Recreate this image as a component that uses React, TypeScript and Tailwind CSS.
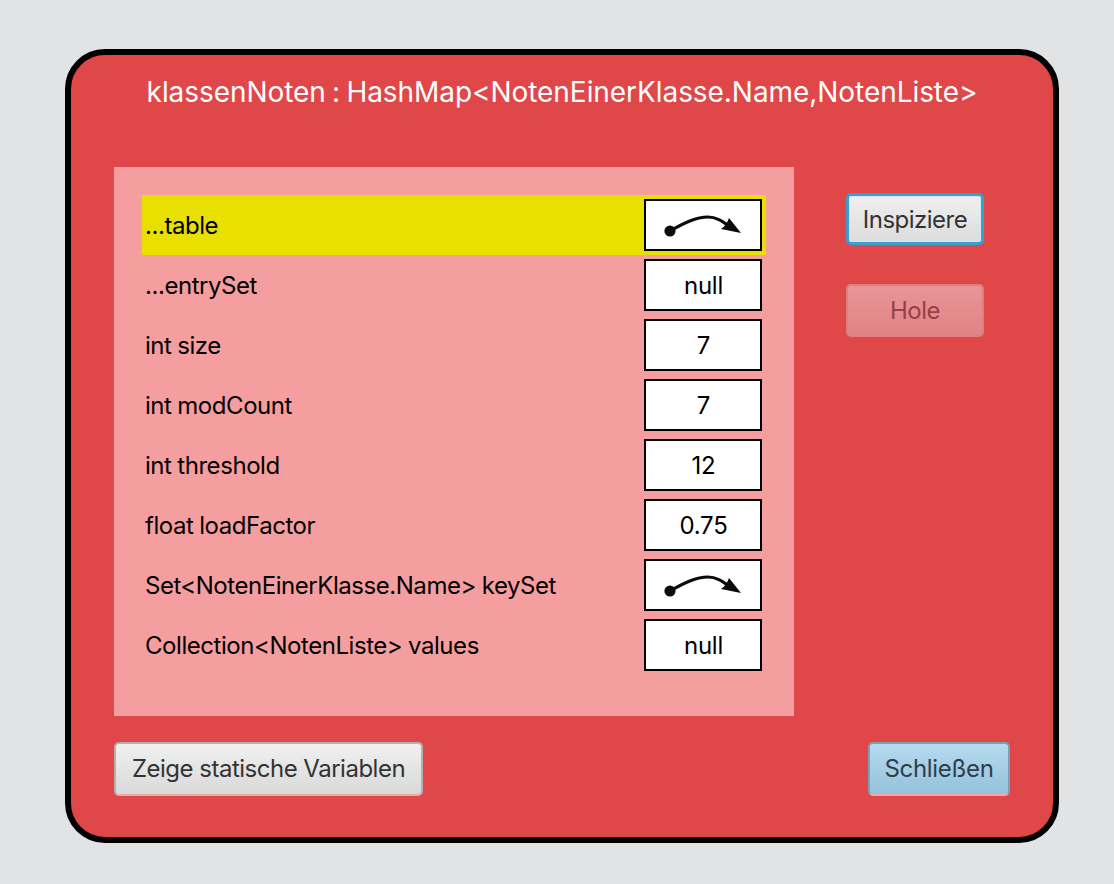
const font = "font-['Inter','Liberation_Sans',sans-serif]";

type Row = { label: string; value?: string; highlight?: boolean };

const rows: Row[] = [
  { label: "...table", highlight: true },
  { label: "...entrySet", value: "null" },
  { label: "int size", value: "7" },
  { label: "int modCount", value: "7" },
  { label: "int threshold", value: "12" },
  { label: "float loadFactor", value: "0.75" },
  { label: "Set<NotenEinerKlasse.Name> keySet" },
  { label: "Collection<NotenListe> values", value: "null" },
];

function Arrow() {
  return (
    <svg width="78" height="24" viewBox="0 0 78 24" className="-ml-[1px] block">
      <circle cx="6" cy="17" r="5.6" fill="#0a0a0a" />
      <path d="M6 17 C 20 9, 32 3, 44 3 C 52 3, 58 7, 65 12" fill="none" stroke="#0a0a0a" strokeWidth="3" />
      <path d="M77 19 L 57 15 Q 62 12 65 4 Z" fill="#0a0a0a" />
    </svg>
  );
}

function ValueRow({ row }: { row: Row }) {
  return (
    <div className={`flex h-[60px] w-[624px] items-center pl-[3px] pr-1 ${row.highlight ? "bg-[#e8e000]" : ""}`}>
      <span className="flex-1 pt-[1px] text-[24px] tracking-[-0.45px] [word-spacing:-0.5px] text-black">{row.label}</span>
      <div className="flex h-[52px] w-[118px] items-center justify-center border-2 border-black bg-white pl-[1px] pt-[1px] text-[24px] tracking-[-0.3px] text-black">
        {row.value ?? <Arrow />}
      </div>
    </div>
  );
}

export default function App() {
  return (
    <div className={`min-h-screen bg-[#e1e3e5] pl-[65px] pt-[49px] ${font}`}>
      <div className="flex h-[794px] w-[994px] flex-col rounded-[40px] border-[6px] border-black bg-[#e04748] pl-[43px] pr-[43px]">
        <h1 className="mt-[17px] h-[41px] -ml-[43px] -mr-[43px] text-center text-[28px] leading-[40px] font-normal tracking-[-0.06px] [word-spacing:-1.5px] text-white">
          klassenNoten : HashMap&lt;NotenEinerKlasse.Name,NotenListe&gt;
        </h1>
        <div className="mt-[54px] flex items-start">
          <div className="h-[549px] w-[680px] bg-[#f59e9f] px-[28px] py-[28px]">
            {rows.map((row) => (
              <ValueRow key={row.label} row={row} />
            ))}
          </div>
          <div className="ml-[52px] mt-[26px] flex flex-col gap-[39px]">
            <button className="h-[52px] w-[138px] rounded-[5px] border-[3px] border-[#3a9fd0] bg-gradient-to-b from-[#f0f0f0] to-[#dcdcdc] pt-[1px] text-[24px] tracking-[-0.5px] text-[#333] shadow-[inset_0_0_0_1px_#cfe8f5]">
              Inspiziere
            </button>
            <button className="h-[53px] w-[138px] rounded-[5px] border-2 border-[#dc7f80] border-b-[#e67c7d] bg-gradient-to-b from-[#e99597] to-[#e08385] text-[24px] tracking-[-0.5px] text-[#964043]">
              Hole
            </button>
          </div>
        </div>
        <div className="mt-[26px] flex items-start justify-between">
          <button className="h-[54px] w-[309px] rounded-[5px] border-2 border-[#b4b0b0] border-b-[#f0a8a8] bg-gradient-to-b from-[#f0f0f0] to-[#d9d9d9] text-[24px] tracking-[-0.5px] text-[#333]">
            Zeige statische Variablen
          </button>
          <button className="h-[54px] w-[142px] rounded-[5px] border-2 border-[#7f9fb2] border-b-[#f0a8a8] bg-gradient-to-b from-[#b5dbef] to-[#94c2da] text-[24px] tracking-[-0.3px] text-[#2f3e4a]">
            Schließen
          </button>
        </div>
      </div>
    </div>
  );
}
